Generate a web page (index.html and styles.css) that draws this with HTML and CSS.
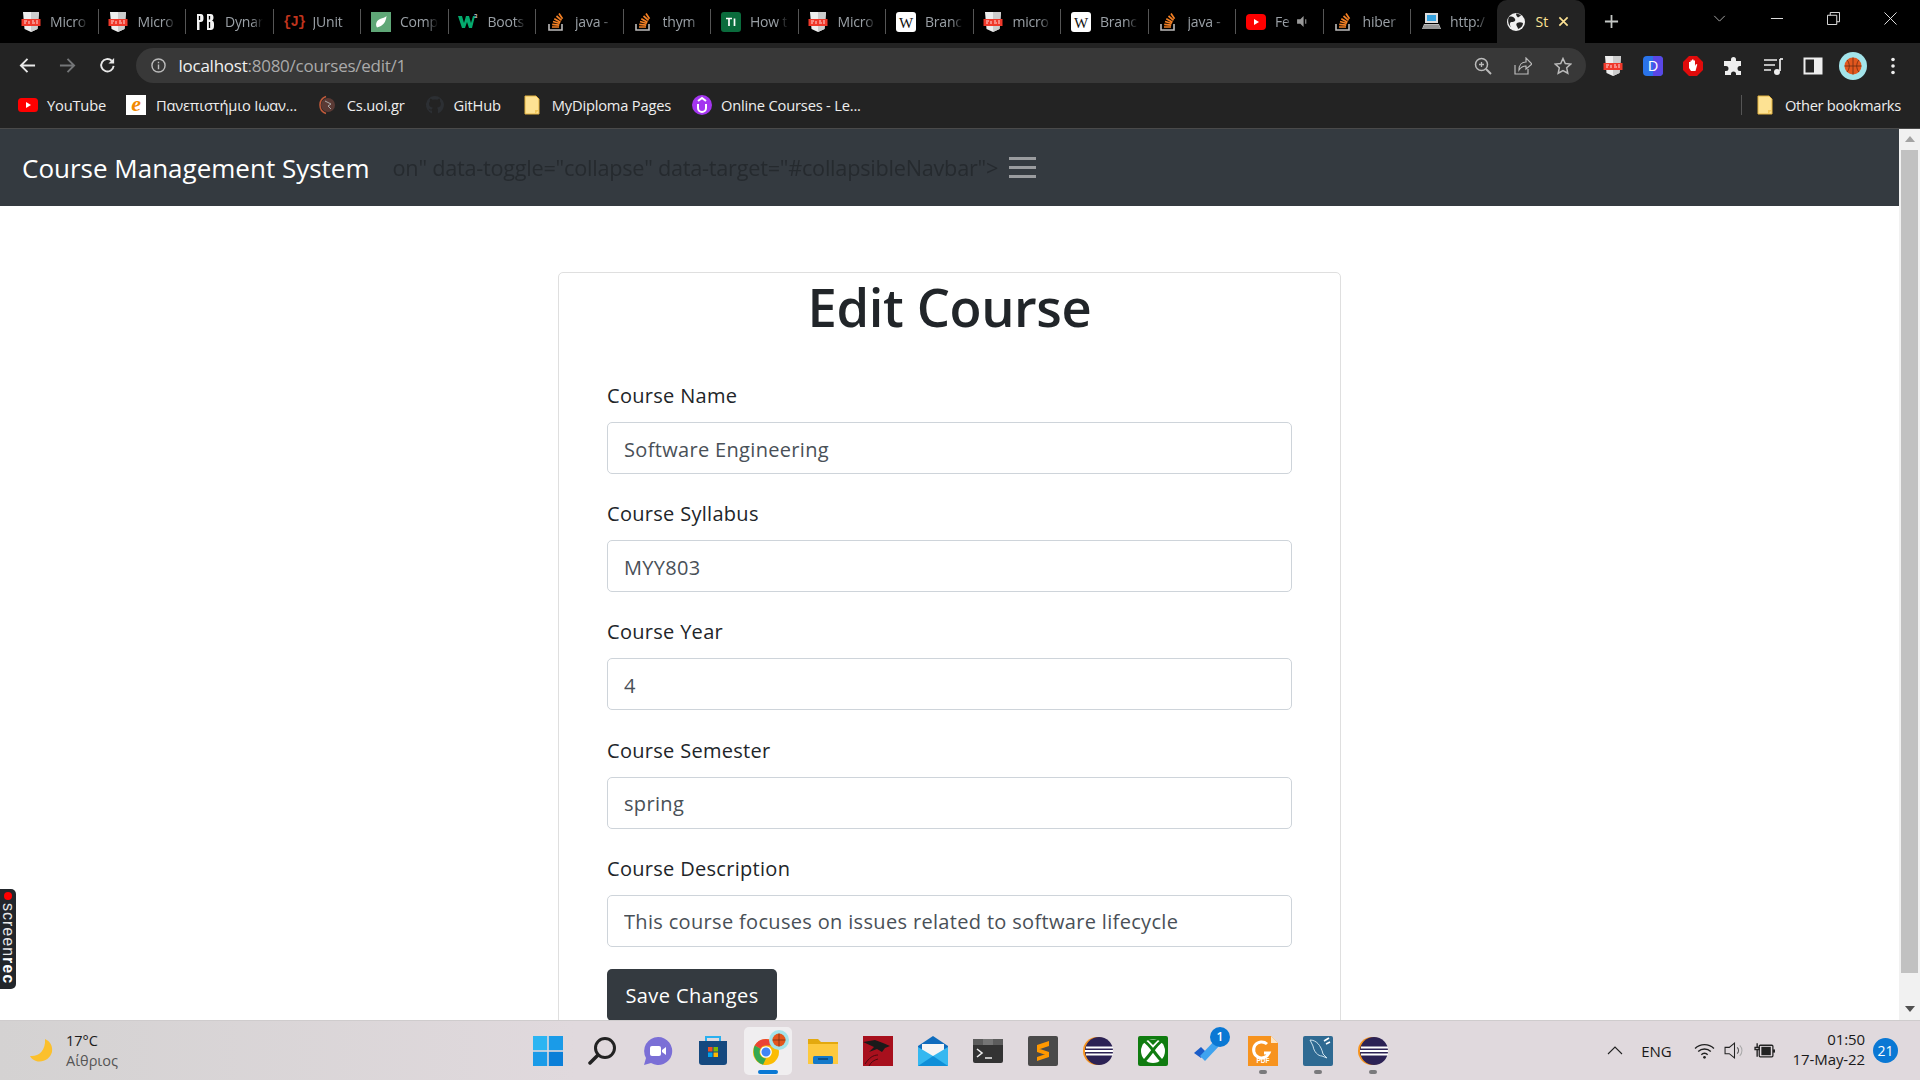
FILE: index.html
```html
<!DOCTYPE html>
<html lang="en">
<head>
<meta charset="utf-8">
<title>Course Management System</title>
<link rel="stylesheet" href="styles.css">
</head>
<body>
<svg class="defs" width="0" height="0">
  <defs>
    <symbol id="pdf" viewBox="0 0 20 20"><path d="M2 0h16l-1.500 17L10 20l-6.500-3z" fill="#eee"/><path d="M10 0h8l-1.500 17L10 20z" fill="#ccc"/><rect x="0.500" y="7" width="19" height="7" fill="#f0392b"/><path d="M3 9h3M8 9v3M11 9h2M15 9h2M3 11h2M11 11h3M15 11h2" stroke="#fdd" stroke-width="1"/></symbol>
    <symbol id="so" viewBox="0 0 20 20"><path d="M3 12v6h13v-6" fill="none" stroke="#bcbbbb" stroke-width="1.600"/><path d="M6 15h7M6.200 12.300l7 .8M7 9.500l6.800 2M8.300 6.800l6.200 3.400M10.500 4l5 4.400M13 1.500l3.500 5.300" stroke="#f48024" stroke-width="1.700" fill="none"/></symbol>
    <symbol id="wiki" viewBox="0 0 20 20"><rect width="20" height="20" rx="3" fill="#fff"/><text x="10" y="15.500" font-family="Liberation Serif" font-size="15" text-anchor="middle" fill="#111">W</text></symbol>
    <symbol id="folder" viewBox="0 0 16 20"><path d="M1 1h11l3 3v15H1z" fill="#fde293" stroke="#e3b341"/><path d="M11 19v-4h4" fill="#f3c95c"/></symbol>
    <symbol id="eclipse" viewBox="0 0 30 30"><circle cx="14" cy="15" r="14" fill="#f7941e"/><circle cx="16" cy="15" r="14" fill="#2c2255"/><path d="M3 11.500h27M2 15h28M3 18.500h27" stroke="#fff" stroke-width="1.800"/></symbol>
  </defs>
</svg>

<header class="tabstrip">
  <div class="tab"><svg class="fav"><use href="#pdf"/></svg><span class="tab-title">Micro</span></div>
  <div class="tab"><svg class="fav"><use href="#pdf"/></svg><span class="tab-title">Micro</span></div>
  <div class="tab"><svg class="fav" viewBox="0 0 20 20"><path d="M1 2h3.500c2.500 0 3 1.500 3 4s-.5 4-3 4H3.500v8H1zM11 2h3.500c2 0 3 1 3 3.500 0 1.500-.5 2.500-1.500 3 1.500.5 2 1.800 2 3.500v2c0 2.500-1 4-3.500 4H11z" fill="#f4f4f4"/><path d="M3.500 4v4M13.500 4v3.500M13.500 10v6" stroke="#000" stroke-width="1.300"/></svg><span class="tab-title">Dynar</span></div>
  <div class="tab"><span class="fav fav-junit">{J}</span><span class="tab-title">JUnit</span></div>
  <div class="tab"><svg class="fav" viewBox="0 0 20 20"><rect width="20" height="20" fill="#5fa777"/><path d="M15.500 4C15 10 12 14 6 15.500c-2-3-.5-7 3-8.500 3-1 5-1.500 6.500-3z" fill="#fff"/></svg><span class="tab-title">Comp</span></div>
  <div class="tab"><svg class="fav" viewBox="0 0 20 20"><path d="M0 4h4l2 7 2-7h3l2 7 2-7h2l-3 12h-3l-2-6-2 6H4z" fill="#04aa6d"/><text x="16" y="6" font-size="6" fill="#fff" font-family="Liberation Sans">3</text></svg><span class="tab-title">Boots</span></div>
  <div class="tab"><svg class="fav"><use href="#so"/></svg><span class="tab-title">java -</span></div>
  <div class="tab"><svg class="fav"><use href="#so"/></svg><span class="tab-title">thym</span></div>
  <div class="tab"><svg class="fav" viewBox="0 0 20 20"><rect width="20" height="20" rx="3" fill="#0a6b3c"/><path d="M5 6.500h6M8 6.500v7.500M13.500 6.500v7.500" stroke="#fff" stroke-width="1.700"/></svg><span class="tab-title">How t</span></div>
  <div class="tab"><svg class="fav"><use href="#pdf"/></svg><span class="tab-title">Micro</span></div>
  <div class="tab"><svg class="fav"><use href="#wiki"/></svg><span class="tab-title">Branc</span></div>
  <div class="tab"><svg class="fav"><use href="#pdf"/></svg><span class="tab-title">micro</span></div>
  <div class="tab"><svg class="fav"><use href="#wiki"/></svg><span class="tab-title">Branc</span></div>
  <div class="tab"><svg class="fav"><use href="#so"/></svg><span class="tab-title">java -</span></div>
  <div class="tab tab-audio"><svg class="fav" viewBox="0 0 20 20"><rect y="2" width="20" height="16" rx="4" fill="#f00"/><path d="M8 7l5 3-5 3z" fill="#fff"/></svg><span class="tab-title tab-title-short">Fe</span><svg class="speaker" viewBox="0 0 12 12"><path d="M1 4h3l3-3v10L4 8H1z" fill="#999"/><path d="M9 4v4" stroke="#999"/></svg></div>
  <div class="tab"><svg class="fav"><use href="#so"/></svg><span class="tab-title">hiber</span></div>
  <div class="tab tab-last"><svg class="fav" viewBox="0 0 20 20"><rect x="4" y="1" width="13" height="10" fill="#ddd"/><rect x="6" y="3" width="9" height="6" fill="#36a3e0"/><path d="M3 12h15l2 5H1z" fill="#bbb"/><path d="M3 14h15M2 16h17" stroke="#555" stroke-width=".7"/></svg><span class="tab-title">http:/</span></div>
  <div class="tab-active">
    <svg class="fav" viewBox="0 0 20 20"><circle cx="10" cy="10" r="9" fill="#f1f1f1"/><path d="M3 5c3-1 5 0 6 2s-1 3-3 3-3 2-1 5c-2-1-4-6-2-10zM11 11c2-1 4-1 6 0 0 3-2 5-5 6 0-2-3-4-1-6zM10 1.500c2 0 4 1 5 2l-3 2c-1-1-2-2-2-4z" fill="#232323"/></svg>
    <span class="tab-title-active">St</span>
    <svg class="close" viewBox="0 0 12 12"><path d="M1.500 1.500l9 9M10.500 1.500l-9 9" stroke="#fde293" stroke-width="1.800"/></svg>
  </div>
  <svg class="newtab" viewBox="0 0 16 16"><path d="M8 1v14M1 8h14" stroke="#c4c7c5" stroke-width="1.900"/></svg>
  <div class="winctl">
    <svg class="win-chev" viewBox="0 0 14 8"><path d="M1 1l6 6 6-6" fill="none" stroke="#bbb" stroke-width="1"/></svg>
    <svg class="win-btn" viewBox="0 0 14 14"><path d="M1 7h13" stroke="#eee" stroke-width="1"/></svg>
    <svg class="win-btn" viewBox="0 0 14 14"><path d="M.5 3.500h10v10H.5zM3.500 3.500v-3h10v10h-3" fill="none" stroke="#eee"/></svg>
    <svg class="win-btn" viewBox="0 0 14 14"><path d="M.5.5l13 13M13.500.5l-13 13" stroke="#eee"/></svg>
  </div>
</header>

<div class="toolbar">
  <svg class="nav-ico" viewBox="0 0 18 18"><path d="M17 9H2M9 2L2 9l7 7" fill="none" stroke="#e8e8e8" stroke-width="2"/></svg>
  <svg class="nav-ico" viewBox="0 0 18 18"><path d="M1 9h15M9 2l7 7-7 7" fill="none" stroke="#747678" stroke-width="2"/></svg>
  <svg class="nav-ico" viewBox="0 0 18 18"><path d="M15.500 9.500A6.600 6.600 0 1 1 13.500 4" fill="none" stroke="#e8e8e8" stroke-width="2"/><path d="M16 1v6h-6z" fill="#e8e8e8"/></svg>
  <div class="omnibox">
    <svg class="info" viewBox="0 0 16 16"><circle cx="8" cy="8" r="7" fill="none" stroke="#bbb" stroke-width="1.500"/><path d="M8 7v5M8 4v1.600" stroke="#bbb" stroke-width="1.500"/></svg>
    <span class="url"><span class="url-host">localhost</span>:8080/courses/edit/1</span>
    <div class="omni-actions">
      <svg class="omni-ico" viewBox="0 0 18 18"><circle cx="7.500" cy="7.500" r="6" fill="none" stroke="#bbb" stroke-width="1.500"/><path d="M12 12l5 5" stroke="#bbb" stroke-width="2"/><path d="M7.500 5v5M5 7.500h5" stroke="#bbb" stroke-width="1.300"/></svg>
      <svg class="omni-ico" viewBox="0 0 18 18"><path d="M1 8v9h13v-5M5 13c0-5 3-8 7-8V1l6 6-6 5V9c-3 0-5 1-7 4z" fill="none" stroke="#bbb" stroke-width="1.200"/></svg>
      <svg class="omni-ico" viewBox="0 0 18 18"><path d="M9 1.500l2.300 5 5.400.6-4 3.700 1.100 5.400L9 13.500l-4.800 2.700 1.100-5.400-4-3.700 5.400-.6z" fill="none" stroke="#bbb" stroke-width="1.500"/></svg>
    </div>
  </div>
  <div class="ext-row">
    <svg class="ext"><use href="#pdf"/></svg>
    <svg class="ext" viewBox="0 0 20 20"><rect width="20" height="20" rx="4" fill="#2a74ea"/><path d="M10 0h6a4 4 0 0 1 4 4v12a4 4 0 0 1-4 4h-6z" fill="#5a47e6"/><text x="10" y="15" font-size="14" font-family="Liberation Sans" text-anchor="middle" fill="#fff">D</text></svg>
    <svg class="ext" viewBox="0 0 20 20"><path d="M6 0h8l6 6v8l-6 6H6l-6-6V6z" fill="#e00b0b"/><path d="M6 9V6h1.500v3-4.500H9V9 3.500h1.500V9 4.500H12V10l1-2 1.300.5L12.500 15H8l-2-3z" fill="#fff"/></svg>
    <svg class="ext" viewBox="0 0 20 20"><path d="M8 3.500a2.500 2.500 0 0 1 5 0V5h5v5h-1a2.500 2.500 0 0 0 0 5h1v4h-5v-1a2.500 2.500 0 0 0-5 0v1H2v-4h1a2.500 2.500 0 0 0 0-5H1V5h7z" fill="#eee"/></svg>
    <svg class="ext" viewBox="0 0 20 20"><path d="M1 4h13M1 9h11M1 14h7" stroke="#eee" stroke-width="1.700"/><path d="M17 3v12" stroke="#eee" stroke-width="1.700"/><circle cx="14" cy="16" r="3" fill="#eee"/><path d="M17 3h3" stroke="#eee" stroke-width="1.700"/></svg>
    <svg class="ext" viewBox="0 0 20 20"><rect x="1.500" y="2.500" width="17" height="15" fill="none" stroke="#eee" stroke-width="2"/><rect x="11" y="2.500" width="7.500" height="15" fill="#eee"/></svg>
    <svg class="ext ext-avatar" viewBox="0 0 28 28"><circle cx="14" cy="14" r="14" fill="#a3e4ea"/><circle cx="14" cy="14" r="8.500" fill="#e2571e"/><path d="M5.500 14h17M14 5.500v17M8 8c3 3 3 9 0 12M20 8c-3 3-3 9 0 12" stroke="#6b2b10" fill="none" stroke-width=".8"/></svg>
    <svg class="ext" viewBox="0 0 20 20"><circle cx="10" cy="3.500" r="1.800" fill="#eee"/><circle cx="10" cy="10" r="1.800" fill="#eee"/><circle cx="10" cy="16.500" r="1.800" fill="#eee"/></svg>
  </div>
</div>

<nav class="bookmarks">
  <a class="bm bm-yt"><svg class="bm-ico" viewBox="0 0 20 20"><rect y="3" width="20" height="14" rx="3.500" fill="#f00"/><path d="M8 7l5 3-5 3z" fill="#fff"/></svg>YouTube</a>
  <a class="bm bm-uni"><span class="bm-ico bm-e">e</span>Πανεπιστήμιο Ιωαν...</a>
  <a class="bm bm-cs"><svg class="bm-ico" viewBox="0 0 20 20"><circle cx="10" cy="10" r="7" fill="#5a3a35"/><path d="M8 1.500A9 9 0 0 0 8 18.500" fill="none" stroke="#c25a3a" stroke-width="1.500"/><path d="M7 6l6 3-3 2 3 3" stroke="#aaa" fill="none"/></svg>Cs.uoi.gr</a>
  <a class="bm bm-gh"><svg class="bm-ico" viewBox="0 0 20 20"><path d="M10 1a9 9 0 0 0-3 17.500v-3c-2 .4-3-.8-3.300-2 1 .3 1.600 1.500 3.300 1 0-1 .5-1.300 1-1.700-2.500-.3-4-1.500-4-4 0-1 .4-1.800 1-2.500-.2-.7-.2-1.700.2-2.500 1 0 2 .6 2.500 1 1.500-.4 3-.4 4.500 0 .5-.4 1.500-1 2.500-1 .4.8.4 1.800.2 2.500.6.7 1 1.500 1 2.500 0 2.500-1.500 3.700-4 4 .6.500 1 1 1 2v3.700A9 9 0 0 0 10 1z" fill="#2c2f33"/></svg>GitHub</a>
  <a class="bm bm-dip"><svg class="bm-ico bm-folder"><use href="#folder"/></svg>MyDiploma Pages</a>
  <a class="bm bm-ud"><svg class="bm-ico" viewBox="0 0 20 20"><circle cx="10" cy="10" r="10" fill="#a435f0"/><path d="M6 9v4a4 4 0 0 0 8 0V9M6 6l4-3 4 3" fill="none" stroke="#fff" stroke-width="2"/></svg>Online Courses - Le...</a>
  <div class="bm-right">
    <a class="bm bm-other"><svg class="bm-ico bm-folder"><use href="#folder"/></svg>Other bookmarks</a>
  </div>
</nav>

<div class="viewport">
  <main class="page">
    <div class="navbar">
      <span class="brand">Course Management System</span>
      <span class="leak">on" data-toggle="collapse" data-target="#collapsibleNavbar"&gt;</span>
      <span class="burger"><i></i><i></i><i></i></span>
    </div>
    <section class="card">
      <h1 class="title">Edit Course</h1>
      <form class="form">
        <div class="group"><label class="label">Course Name</label><input class="input" value="Software Engineering" readonly></div>
        <div class="group"><label class="label">Course Syllabus</label><input class="input" value="MYY803" readonly></div>
        <div class="group"><label class="label">Course Year</label><input class="input" value="4" readonly></div>
        <div class="group"><label class="label">Course Semester</label><input class="input" value="spring" readonly></div>
        <div class="group"><label class="label">Course Description</label><input class="input" value="This course focuses on issues related to software lifecycle" readonly></div>
        <button class="save" type="button">Save Changes</button>
      </form>
    </section>
  </main>
  <div class="scrollbar">
    <span class="arrow-up"></span>
    <span class="thumb"></span>
    <span class="arrow-down"></span>
  </div>
  <div class="screenrec"><span class="rec-dot"></span><span class="rec-text">screen<b>rec</b></span></div>
</div>

<footer class="taskbar">
  <div class="weather">
    <svg class="moon" viewBox="0 0 24 24"><path d="M16 0c5 2 8 7 7 13-2 7-9 11-16 9-3-1-5-3-6-5 8 1 16-5 15-17z" fill="#fbc02d"/></svg>
    <div class="weather-text"><span class="temp">17°C</span><span class="cond">Αίθριος</span></div>
  </div>
  <div class="apps">
    <span class="app"><svg class="app-ico" viewBox="0 0 30 30"><rect width="14.200" height="14.200" fill="#2cb5f2"/><rect x="15.800" width="14.200" height="14.200" fill="#1a9be8"/><rect y="15.800" width="14.200" height="14.200" fill="#1a9be8"/><rect x="15.800" y="15.800" width="14.200" height="14.200" fill="#0b7fd8"/></svg></span>
    <span class="app"><svg class="app-ico" viewBox="0 0 30 30"><circle cx="17" cy="12" r="9.500" fill="none" stroke="#222" stroke-width="3"/><path d="M10 19l-8 8" stroke="#222" stroke-width="3.500" stroke-linecap="round"/></svg></span>
    <span class="app"><svg class="app-ico" viewBox="0 0 30 30"><path d="M15 1a14 14 0 1 1-7 26l-7 2 2-7A14 14 0 0 1 15 1z" fill="#7b6fd6"/><rect x="7" y="10" width="11" height="10" rx="2" fill="#fff"/><path d="M19 14l4-3v8l-4-3z" fill="#fff"/></svg></span>
    <span class="app"><svg class="app-ico" viewBox="0 0 30 30"><path d="M8 6V1h14v5" fill="none" stroke="#2ab0ef" stroke-width="2"/><path d="M1 5h28v21a3 3 0 0 1-3 3H4a3 3 0 0 1-3-3z" fill="#15497f"/><rect x="10" y="11" width="4.500" height="4.500" fill="#f25022"/><rect x="15.500" y="11" width="4.500" height="4.500" fill="#7fba00"/><rect x="10" y="16.500" width="4.500" height="4.500" fill="#00a4ef"/><rect x="15.500" y="16.500" width="4.500" height="4.500" fill="#ffb900"/></svg></span>
    <span class="app app-active"><svg class="app-ico" viewBox="0 0 30 30"><circle cx="13" cy="16" r="13" fill="#fbbc04"/><path d="M13 3a13 13 0 0 1 11.300 6.500H13a6.500 6.500 0 0 0-5.600 3.300L1.700 9.500A13 13 0 0 1 13 3z" fill="#ea4335"/><path d="M.700 16a13 13 0 0 1 1-6.500l5.700 3.300A6.500 6.500 0 0 0 13 22.500L10 28.700A13 13 0 0 1 .700 16z" fill="#34a853"/><circle cx="13" cy="16" r="5.200" fill="#4285f4" stroke="#fff" stroke-width="1.300"/></svg><svg class="app-badge" viewBox="0 0 20 20"><circle cx="10" cy="10" r="10" fill="#a3e4ea"/><circle cx="10" cy="10" r="6.500" fill="#e2571e"/><path d="M3.500 10h13M10 3.500v13" stroke="#6b2b10" stroke-width=".7"/></svg><i class="run run-blue"></i></span>
    <span class="app"><svg class="app-ico" viewBox="0 0 30 30"><path d="M0 3h10l3 3h17v6H0z" fill="#e3a90f"/><path d="M0 8h30v20H0z" fill="#fdc93e"/><rect x="5" y="20" width="20" height="8" rx="1.500" fill="#1479c9"/><path d="M10 23h10" stroke="#093a65" stroke-width="1.300"/></svg></span>
    <span class="app"><svg class="app-ico" viewBox="0 0 30 30"><rect width="30" height="30" fill="#a8101d"/><path d="M0 6l12-2 8 3 7 3-5 2-3 4-5-3-8 3 5-5z" fill="#1a1a1a"/><path d="M2 28c4-6 8-9 13-9M6 30c2-4 5-6 9-7" stroke="#4a0a10" fill="none"/></svg></span>
    <span class="app"><svg class="app-ico" viewBox="0 0 30 30"><path d="M0 10L15 0l15 10v20H0z" fill="#0f6cbd"/><path d="M4 8h22v8L15 22 4 16z" fill="#f5f5f5"/><path d="M0 11l15 9 15-9v19H0z" fill="#35b8f0"/><path d="M0 30l15-10 15 10z" fill="#0f8fd8"/></svg></span>
    <span class="app"><svg class="app-ico" viewBox="0 0 30 30"><rect y="3" width="30" height="24" rx="2" fill="#333"/><rect x="0" y="3" width="30" height="6" fill="#5c5c5c"/><rect x="10" y="3" width="10" height="6" fill="#757575"/><path d="M4 13l5 4-5 4M12 22h7" fill="none" stroke="#eee" stroke-width="1.600"/></svg></span>
    <span class="app"><svg class="app-ico" viewBox="0 0 30 30"><rect width="30" height="30" rx="2" fill="#4a4a4a"/><path d="M21 5v5L9 14V9zM9 12l12 4v4L9 16zM21 17v4L9 25v-4z" fill="#ff9800"/></svg></span>
    <span class="app"><svg class="app-ico"><use href="#eclipse"/></svg></span>
    <span class="app"><svg class="app-ico" viewBox="0 0 30 30"><rect width="30" height="30" rx="2" fill="#107c10"/><circle cx="15" cy="15" r="12" fill="#fff"/><path d="M6 5c6 3 12 15 18 20M24 5C18 8 12 20 6 25" fill="none" stroke="#107c10" stroke-width="3"/><path d="M8 2c4 2 10 2 14 0l-7 7z" fill="#107c10"/></svg></span>
    <span class="app"><svg class="app-ico" viewBox="0 0 30 30"><path d="M1 17l7-6 5 5-5 6z" fill="#1b5dc8"/><path d="M7 20l16-17 5 5-16 17z" fill="#3fa3ef"/></svg><span class="todo-badge">1</span></span>
    <span class="app"><svg class="app-ico" viewBox="0 0 30 30"><path d="M0 0h23l7 7v23H0z" fill="#f7931e"/><path d="M23 0l7 7h-7z" fill="#fde5c3"/><path d="M19 8a8 8 0 1 0 2 9h-5" fill="none" stroke="#fff" stroke-width="3"/><text x="15" y="27" font-size="6.500" font-weight="700" text-anchor="middle" fill="#fff" font-family="Liberation Sans">PDF</text></svg><i class="run"></i></span>
    <span class="app"><svg class="app-ico" viewBox="0 0 30 30"><rect width="30" height="30" rx="2" fill="#2f6a92"/><path d="M7 4c6 0 11 5 13 14l4 4-5-2c-4 0-8-4-9-10z" fill="none" stroke="#cfe3ee"/><path d="M21 5l5-3M23 8l4-2" stroke="#fff" stroke-width="1.600"/></svg><i class="run"></i></span>
    <span class="app"><svg class="app-ico"><use href="#eclipse"/></svg><i class="run"></i></span>
  </div>
  <div class="tray">
    <svg class="tray-chev" viewBox="0 0 16 9"><path d="M1 8l7-7 7 7" fill="none" stroke="#222" stroke-width="1.100"/></svg>
    <span class="lang">ENG</span>
    <svg class="tray-ico" viewBox="0 0 20 16"><path d="M1 6a13 13 0 0 1 18 0M4 9a8.500 8.500 0 0 1 12 0M7 12a4 4 0 0 1 6 0" fill="none" stroke="#222" stroke-width="1.300"/><circle cx="10" cy="14.500" r="1.300" fill="#222"/></svg>
    <svg class="tray-ico" viewBox="0 0 20 16"><path d="M1 5h4l5-4v14l-5-4H1z" fill="none" stroke="#222" stroke-width="1"/><path d="M12.500 5a4 4 0 0 1 0 6" fill="none" stroke="#555"/><path d="M15 3a7 7 0 0 1 0 10" fill="none" stroke="#aaa"/></svg>
    <svg class="tray-ico" viewBox="0 0 20 16"><path d="M3 1v4M1 5h4v2H1zM3 7v7" stroke="#222" stroke-width="1.300" fill="none"/><rect x="5" y="3" width="13" height="11" rx="1" fill="none" stroke="#222" stroke-width="1.200"/><rect x="7" y="4.500" width="9" height="8" fill="#222"/><rect x="18" y="7" width="2" height="3" fill="#222"/></svg>
    <div class="clock"><span>01:50</span><span>17-May-22</span></div>
    <span class="notif">21</span>
  </div>
</footer>
</body>
</html>
```

FILE: styles.css
```css
* { box-sizing: border-box; }
html, body { margin: 0; height: 100%; }
body {
  width: 1920px;
  height: 1080px;
  overflow: hidden;
  display: flex;
  flex-direction: column;
  font-family: "Open Sans", "Noto Sans", sans-serif;
  background: #fff;
}
.defs { position: absolute; }

/* Tab strip */
.tabstrip {
  height: 43px;
  flex: none;
  background: #000;
  display: flex;
  align-items: center;
  padding-left: 11px;
}
.tab {
  width: 87.5px;
  height: 25px;
  flex: none;
  display: flex;
  align-items: center;
  border-right: 1px solid #555;
  padding-left: 9.5px;
  gap: 9.5px;
}
.tab-last { border-right: 0; }
.fav { width: 20px; height: 20px; flex: none; display: block; }
.fav-junit { color: #c0341d; font: 700 14px "Liberation Mono", monospace; letter-spacing: -1px; line-height: 20px; white-space: nowrap; }
.tab-title {
  width: 38px;
  overflow: hidden;
  white-space: nowrap;
  font-size: 14px;
  color: #9aa0a6;
  letter-spacing: -.2px;
  -webkit-mask-image: linear-gradient(90deg, #000 70%, transparent);
  mask-image: linear-gradient(90deg, #000 70%, transparent);
}
.tab-title-short { width: 16px; }
.speaker { width: 13px; height: 13px; margin-left: -5px; }
.tab-active {
  width: 88px;
  height: 43px;
  flex: none;
  margin-left: -2px;
  background: #232323;
  border-radius: 10px 10px 0 0;
  display: flex;
  align-items: center;
  padding-left: 9px;
}
.tab-title-active { font-size: 14px; color: #fde293; margin-left: 10px; }
.close { width: 11px; height: 11px; margin-left: 10px; }
.newtab { width: 15px; height: 15px; margin-left: 19px; flex: none; }
.winctl { margin-left: auto; display: flex; align-items: center; height: 43px; padding-bottom: 6px; }
.win-chev { width: 13px; height: 7px; margin-right: 44px; }
.win-btn { width: 13px; height: 13px; margin-right: 44px; }
.win-btn:last-child { margin-right: 23px; }

/* Toolbar */
.toolbar {
  height: 45px;
  flex: none;
  background: #232323;
  display: flex;
  align-items: flex-start;
  padding: 5px 0 0 19px;
}
.nav-ico { width: 17px; height: 17px; margin: 9px 23px 0 0; flex: none; }
.omnibox {
  width: 1450px;
  height: 35px;
  margin-left: -3.5px;
  background: #383838;
  border-radius: 18px;
  display: flex;
  align-items: center;
  padding-left: 15px;
  flex: none;
}
.info { width: 15px; height: 15px; flex: none; }
.url { color: #aaa; font-size: 17px; margin-left: 13px; letter-spacing: -.25px; white-space: nowrap; }
.url-host { color: #f1f1f1; }
.omni-actions { margin-left: auto; display: flex; gap: 22px; padding-right: 14px; }
.omni-ico { width: 18px; height: 18px; }
.ext-row { display: flex; align-items: center; gap: 20px; margin-left: 17px; height: 35px; }
.ext { width: 20px; height: 20px; flex: none; }
.ext-avatar { width: 28px; height: 28px; margin: 0 -4px; }

/* Bookmarks */
.bookmarks {
  height: 41px;
  flex: none;
  background: #232323;
  border-bottom: 1px solid #4a4a4a;
  display: flex;
  align-items: center;
  padding: 0 0 7px 18px;
  font-size: 14.7px;
  color: #eee;
  letter-spacing: -.2px;
}
.bm { display: flex; align-items: center; white-space: nowrap; }
.bm-ico { width: 20px; height: 20px; flex: none; margin-right: 9px; }
.bm-folder { width: 16px; margin-right: 12px; }
.bm-e {
  background: #fff;
  color: #f28a00;
  font: italic 700 22px/18px "Liberation Serif", serif;
  text-align: center;
  margin-right: 10px;
}
.bm-yt { margin-right: 20px; }
.bm-uni { margin-right: 21px; }
.bm-cs { margin-right: 20px; }
.bm-gh { margin-right: 23px; }
.bm-dip { margin-right: 21px; }
.bm-other { letter-spacing: -.3px; }
.bm-right { margin-left: auto; padding-left: 15px; border-left: 1px solid #555; margin-right: 19px; height: 20px; display: flex; align-items: center; }

/* Viewport */
.viewport { flex: 1; min-height: 0; display: flex; position: relative; overflow: hidden; }
.page { flex: 1; min-width: 0; overflow: hidden; color: #212529; }
.navbar {
  height: 77px;
  background: #343a40;
  display: flex;
  align-items: center;
  padding-left: 22px;
}
.brand { font-size: 26px; color: #fff; white-space: nowrap; }
.leak { font-size: 21.7px; color: #212529; opacity: .75; margin-left: 23px; white-space: nowrap; letter-spacing: -.25px; }
.burger { display: flex; flex-direction: column; gap: 6.5px; margin-left: 11px; width: 27px; }
.burger i { display: block; height: 2.500px; background: #9a9c9f; }
.card {
  width: 783px;
  margin: 66px auto 0;
  border: 1px solid #dfdfdf;
  border-radius: 5px;
  padding: 0 48px 40px;
}
.title {
  margin: 0;
  text-align: center;
  font-size: 52.5px;
  font-weight: 600;
  line-height: 67px;
  letter-spacing: -.4px;
  padding-bottom: 41px;
}
.form { display: flex; flex-direction: column; }
.group { display: flex; flex-direction: column; height: 118.200px; }
.label { font-size: 20px; line-height: 30px; margin-bottom: 11px; letter-spacing: .3px; }
.input {
  height: 52px;
  width: 100%;
  border: 1px solid #ced4da;
  border-radius: 5px;
  padding: 2px 16px 0;
  font: 20px "Open Sans", sans-serif;
  color: #495057;
  letter-spacing: .33px;
  background: #fff;
  outline: none;
}
.save {
  align-self: flex-start;
  width: 170px;
  height: 52px;
  border: 0;
  border-radius: 5px;
  padding: 2px 0 0;
  background: #343a40;
  color: #fff;
  font: 20px "Open Sans", sans-serif;
  letter-spacing: .4px;
  margin-top: -3px;
}

/* Scrollbar */
.scrollbar { width: 21px; flex: none; background: #f1f1f1; display: flex; flex-direction: column; align-items: center; padding-top: 7px; }
.thumb { width: 17px; height: 823px; margin-top: 8px; background: #c1c1c1; }
.arrow-up, .arrow-down { width: 0; height: 0; border-left: 5px solid transparent; border-right: 5px solid transparent; }
.arrow-up { border-bottom: 6px solid #a3a3a3; }
.arrow-down { border-top: 6px solid #505050; margin-top: 33px; }

/* Screenrec badge */
.screenrec {
  position: absolute;
  left: 0;
  top: 760px;
  width: 16px;
  height: 100px;
  background: #22262b;
  border-radius: 0 5px 5px 0;
  display: flex;
  flex-direction: column;
  align-items: center;
  padding-top: 3px;
}
.rec-dot { width: 8px; height: 8px; border-radius: 50%; background: #f00; flex: none; }
.rec-text { writing-mode: vertical-rl; color: #e8e8e8; font: 16px/16px "Liberation Sans", sans-serif; letter-spacing: 1px; margin-top: 3px; white-space: nowrap; }
.rec-text b { color: #fff; }

/* Taskbar */
.taskbar {
  height: 60px;
  flex: none;
  background: linear-gradient(90deg, #d4d2d2, #e0d9dd 30%, #e0d9dd);
  border-top: 1px solid #cfcccd;
  position: relative;
  display: flex;
  align-items: center;
}
.weather { display: flex; align-items: center; padding-left: 29px; width: 520px; flex: none; }
.moon { width: 24px; height: 24px; margin-right: 13px; }
.weather-text { display: flex; flex-direction: column; font-size: 14.5px; line-height: 20px; }
.temp { color: #1a1a1a; }
.cond { color: #555; }
.apps { display: flex; align-items: center; }
.app { width: 55px; height: 48px; display: flex; align-items: center; justify-content: center; position: relative; flex: none; }
.app-ico { width: 30px; height: 30px; display: block; }
.app-active { background: #f0eef0; border-radius: 5px; width: 48px; margin: 0 3.500px; }
.app-badge { position: absolute; width: 20px; height: 20px; top: 3px; right: 3px; }
.run { position: absolute; bottom: 1px; left: 50%; width: 8px; height: 4px; margin-left: -4px; border-radius: 2px; background: #7a7a7c; }
.run-blue { width: 20px; margin-left: -10px; background: #0a78d4; }
.todo-badge {
  position: absolute;
  top: 0;
  right: 5px;
  width: 20px;
  height: 20px;
  border-radius: 50%;
  background: #0a78d4;
  color: #fff;
  font-size: 12px;
  font-weight: 600;
  line-height: 20px;
  text-align: center;
}
.tray { margin-left: auto; display: flex; align-items: center; height: 100%; padding-right: 22px; color: #1a1a1a; font-size: 15px; }
.tray-chev { width: 16px; height: 9px; margin-right: 18px; }
.lang { margin-right: 22px; letter-spacing: -.1px; }
.tray-ico { width: 21px; height: 17px; margin-right: 9px; }
.clock { display: flex; flex-direction: column; align-items: flex-end; line-height: 20px; margin: 0 8px 0 9px; padding-bottom: 3px; font-size: 15px; letter-spacing: -.1px; }
.notif { width: 25px; height: 25px; border-radius: 50%; background: #0a78d4; color: #fff; font-size: 14px; line-height: 25px; text-align: center; }
```
